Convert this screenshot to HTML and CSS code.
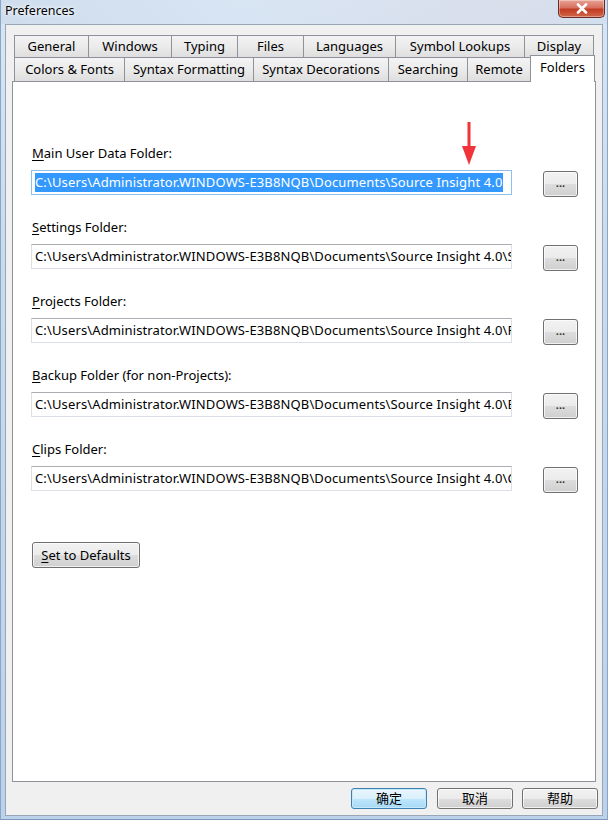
FILE: index.html
```html
<!DOCTYPE html>
<html>
<head>
<meta charset="utf-8">
<link rel="stylesheet" href="styles.css">
</head>
<body>
<div class="window">
  <div class="titlebar">
    <span class="title">Preferences</span>
    <div class="close"><svg width="14" height="11" viewBox="0 0 14 11"><path d="M3 1.5 L11 9.5 M11 1.5 L3 9.5" stroke="#fff" stroke-width="2.6" stroke-linecap="round"/></svg></div>
  </div>
  <div class="client">
    <div class="tabctl">
      <div class="row row1">
        <div class="tab">General</div>
        <div class="tab">Windows</div>
        <div class="tab">Typing</div>
        <div class="tab">Files</div>
        <div class="tab">Languages</div>
        <div class="tab">Symbol Lookups</div>
        <div class="tab last">Display</div>
      </div>
      <div class="row row2">
        <div class="tab">Colors &amp; Fonts</div>
        <div class="tab">Syntax Formatting</div>
        <div class="tab">Syntax Decorations</div>
        <div class="tab">Searching</div>
        <div class="tab">Remote</div>
        <div class="tab sel">Folders</div>
      </div>
      <div class="panel">
        <svg class="arrow" width="20" height="44" viewBox="0 0 20 44"><path d="M8.5 0 L11.5 0 L11.5 24 L17 24 L10 43 L3 24 L8.5 24 Z" fill="#f0343a"/></svg>
        <div class="group">
          <label class="lbl"><u>M</u>ain User Data Folder:</label>
          <div class="line">
            <div class="input focus"><span class="selected">C:\Users\Administrator.WINDOWS-E3B8NQB\Documents\Source Insight 4.0</span></div>
            <div class="btn dots">...</div>
          </div>
        </div>
        <div class="group">
          <label class="lbl"><u>S</u>ettings Folder:</label>
          <div class="line">
            <div class="input"><span>C:\Users\Administrator.WINDOWS-E3B8NQB\Documents\Source Insight 4.0\S</span></div>
            <div class="btn dots">...</div>
          </div>
        </div>
        <div class="group">
          <label class="lbl"><u>P</u>rojects Folder:</label>
          <div class="line">
            <div class="input"><span>C:\Users\Administrator.WINDOWS-E3B8NQB\Documents\Source Insight 4.0\P</span></div>
            <div class="btn dots">...</div>
          </div>
        </div>
        <div class="group">
          <label class="lbl"><u>B</u>ackup Folder (for non-Projects):</label>
          <div class="line">
            <div class="input"><span>C:\Users\Administrator.WINDOWS-E3B8NQB\Documents\Source Insight 4.0\B</span></div>
            <div class="btn dots">...</div>
          </div>
        </div>
        <div class="group">
          <label class="lbl"><u>C</u>lips Folder:</label>
          <div class="line">
            <div class="input"><span>C:\Users\Administrator.WINDOWS-E3B8NQB\Documents\Source Insight 4.0\C</span></div>
            <div class="btn dots">...</div>
          </div>
        </div>
        <div class="btn defaults"><u>S</u>et to Defaults</div>
      </div>
    </div>
    <div class="footer">
      <div class="btn fbtn default">确定</div>
      <div class="btn fbtn">取消</div>
      <div class="btn fbtn last">帮助</div>
    </div>
  </div>
</div>
</body>
</html>
```
FILE: styles.css
```css
* { box-sizing: border-box; }
html, body { margin: 0; padding: 0; }
body {
  width: 608px;
  height: 820px;
  overflow: hidden;
  font-family: "Noto Sans", "Noto Sans CJK SC", sans-serif;
  font-size: 13px;
  color: #000;
  background: #fff;
}
.window {
  width: 608px;
  height: 820px;
  display: flex;
  flex-direction: column;
  background: linear-gradient(180deg, #d9e6f4 0%, #c9dbee 30%, #bcd2ea 100%);
  border-left: 1px solid #8aa6c6;
  border-right: 1px solid #8aa6c6;
  border-bottom: 1px solid #7b98bc;
}
.titlebar {
  height: 24px;
  flex: none;
  display: flex;
  justify-content: space-between;
  align-items: flex-start;
  padding-left: 4px;
  background: linear-gradient(90deg, rgba(200,215,232,0.6), rgba(214,226,240,0.2) 40%, rgba(220,200,210,0.25) 85%, rgba(200,215,232,0.4));
}
.title {
  font-size: 12.5px;
  line-height: 20px;
  padding-top: 1px;
  color: #000;
  text-shadow: 0 0 6px #fff, 0 0 3px #fff;
}
.close {
  width: 47px;
  height: 18px;
  margin-right: 2px;
  border: 1px solid #6b2a24;
  border-top: none;
  border-radius: 0 0 5px 5px;
  background: linear-gradient(180deg, #e8a394 0%, #d7715f 45%, #c33b22 55%, #d0664a 100%);
  display: flex;
  align-items: center;
  justify-content: center;
  box-shadow: inset 0 0 0 1px rgba(255,255,255,0.35);
}
.client {
  flex: 1;
  margin: 0 4px 3px 4px;
  background: #f0f0f0;
  border: 1px solid #98a6b6;
  display: flex;
  flex-direction: column;
  padding: 10px 6px 0 6px;
}
.tabctl {
  display: flex;
  flex-direction: column;
}
.row {
  display: grid;
  margin-left: 2px;
  margin-right: 1px;
}
.row1 { grid-template-columns: 74px 83px 66px 66px 92px 129px 70px; height: 22px; }
.row2 { grid-template-columns: 110px 129px 135px 79px 63px 64px; height: 24px; }
.tab {
  border-top: 1px solid #8f9298;
  border-left: 1px solid #8f9298;
  background: linear-gradient(180deg, #f3f3f3 0%, #ebebeb 50%, #dedede 100%);
  text-align: center;
  white-space: nowrap;
  line-height: 20px;
}
.row2 .tab { line-height: 22px; }
.tab.last { border-right: 1px solid #8f9298; }
.tab.sel {
  background: #fff;
  border-right: 1px solid #8f9298;
  margin-top: -2px;
  margin-right: -1px;
  margin-bottom: -1px;
  position: relative;
  z-index: 2;
  line-height: 22px;
}
.panel {
  position: relative;
  height: 701px;
  background: #fff;
  border: 1px solid #8f9298;
  padding: 63px 17px 0 18px;
  display: flex;
  flex-direction: column;
}
.arrow {
  position: absolute;
  left: 446px;
  top: 40px;
}
.group {
  display: flex;
  flex-direction: column;
  margin-bottom: 22px;
}
.lbl {
  line-height: 17px;
  height: 17px;
  margin-bottom: 8px;
  padding-left: 1px;
}
.lbl u, .defaults u { text-decoration-thickness: 1px; text-underline-offset: 2px; }
.line {
  display: flex;
  align-items: flex-start;
  justify-content: space-between;
}
.input {
  width: 481px;
  height: 25px;
  border: 1px solid #dbdfe6;
  border-top-color: #abadb3;
  padding: 2px 0 0 3px;
  overflow: hidden;
  white-space: nowrap;
  line-height: 19px;
  letter-spacing: 0.13px;
}
.input.focus {
  border-color: #8ec0ef;
}
.selected {
  background: #3399ff;
  color: #fff;
  display: inline-block;
  padding: 0 1px 0 0;
}
.btn {
  border: 1px solid #707070;
  border-radius: 3px;
  background: linear-gradient(180deg, #f2f2f2 0%, #ebebeb 50%, #dddddd 51%, #cfcfcf 100%);
  box-shadow: inset 0 0 0 1px rgba(255,255,255,0.7);
  display: flex;
  align-items: center;
  justify-content: center;
  white-space: nowrap;
}
.dots {
  width: 35px;
  height: 26px;
  margin-top: 1px;
  font-size: 11px;
  font-weight: bold;
  line-height: 1;
  padding-bottom: 3px;
  color: #333;
}
.defaults {
  align-self: flex-start;
  margin-top: 27px;
  margin-left: 1px;
  width: 108px;
  height: 26px;
}
.footer {
  display: flex;
  justify-content: flex-end;
  padding-top: 6px;
  margin-right: -2px;
}
.fbtn {
  width: 76px;
  height: 21px;
  font-size: 13px;
  line-height: 1;
  margin-left: 9px;
}
.fbtn.default {
  margin-right: 1px;
  border-color: #3c7fb1;
  background: linear-gradient(180deg, #eaf6fd 0%, #d9f0fc 50%, #bee6fd 51%, #a7d9f5 100%);
  box-shadow: inset 0 0 0 1px #c6e8fb;
}
```
